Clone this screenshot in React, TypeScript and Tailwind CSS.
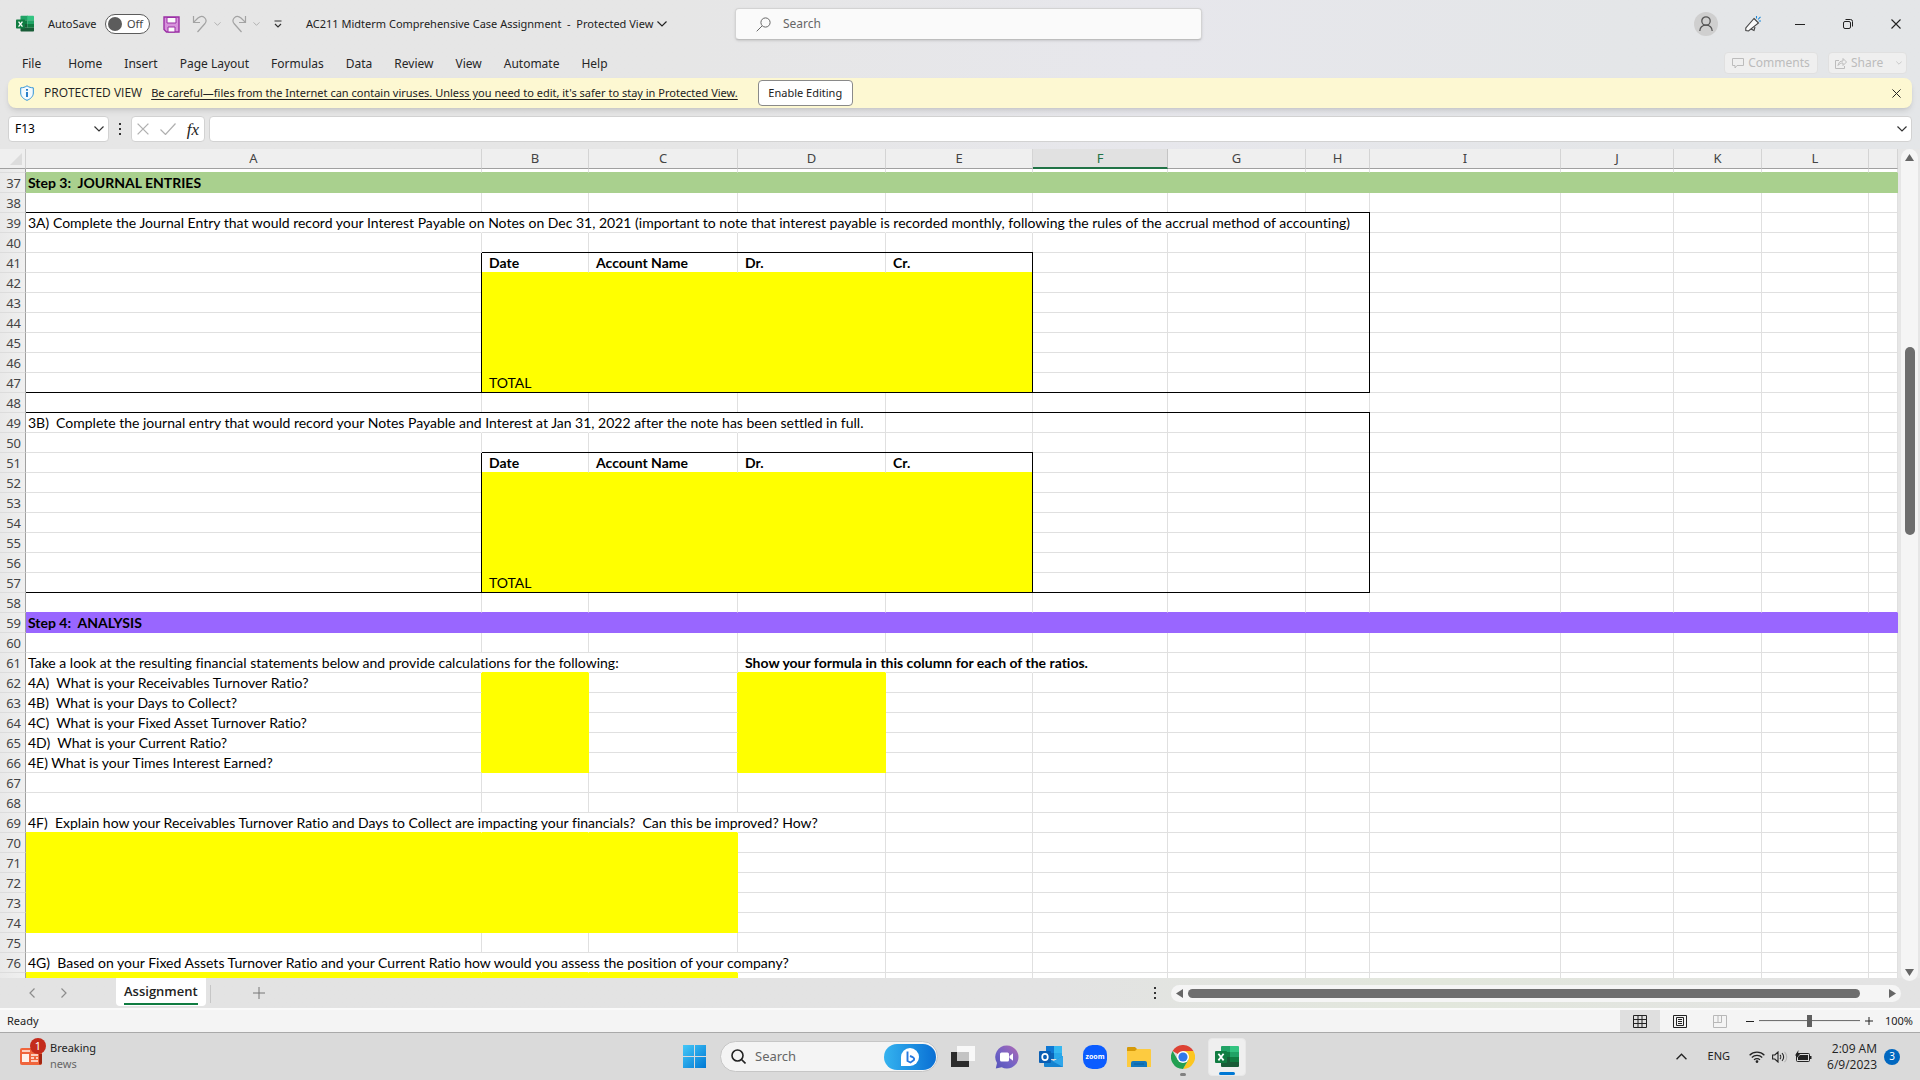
import React from 'react';
import clsx from 'clsx';

type Fill = 'green' | 'purple' | 'yellow';
type Tone = Fill | 'grid' | 'black' | 'none';

interface Range {
  c1: number;
  r1: number;
  c2: number;
  r2: number;
}

interface CellText {
  text: string;
  bold?: boolean;
  // last column index the text runs into
  spill?: number;
}

const columns = ['A', 'B', 'C', 'D', 'E', 'F', 'G', 'H', 'I', 'J', 'K', 'L', ''];
const columnWidths = [
  'w-[456px]', 'w-[107px]', 'w-[149px]', 'w-[148px]', 'w-[147px]', 'w-[135px]', 'w-[138px]',
  'w-[64px]', 'w-[191px]', 'w-[113px]', 'w-[88px]', 'w-[107px]', '',
];
const LAST = columns.length - 1;
const ACTIVE_COLUMN = 5;

const rows = Array.from({ length: 42 }, (_, i) => 36 + i);

const fills: (Range & { color: Fill })[] = [
  { c1: 0, r1: 37, c2: LAST, r2: 37, color: 'green' },
  { c1: 0, r1: 59, c2: LAST, r2: 59, color: 'purple' },
  { c1: 1, r1: 42, c2: 4, r2: 47, color: 'yellow' },
  { c1: 1, r1: 52, c2: 4, r2: 57, color: 'yellow' },
  { c1: 1, r1: 62, c2: 1, r2: 66, color: 'yellow' },
  { c1: 3, r1: 62, c2: 3, r2: 66, color: 'yellow' },
  { c1: 0, r1: 70, c2: 2, r2: 74, color: 'yellow' },
  { c1: 0, r1: 77, c2: 2, r2: 77, color: 'yellow' },
];

const boxes: Range[] = [
  { c1: 0, r1: 39, c2: 7, r2: 47 },
  { c1: 1, r1: 41, c2: 4, r2: 47 },
  { c1: 0, r1: 49, c2: 7, r2: 57 },
  { c1: 1, r1: 51, c2: 4, r2: 57 },
];

const entryHeader = (row: number): Record<string, CellText> => ({
  [`1:${row}`]: { text: 'Date', bold: true },
  [`2:${row}`]: { text: 'Account Name', bold: true },
  [`3:${row}`]: { text: 'Dr.', bold: true },
  [`4:${row}`]: { text: 'Cr.', bold: true },
});

const cells: Record<string, CellText> = {
  '0:37': { text: 'Step 3:  JOURNAL ENTRIES', bold: true },
  '0:39': {
    text: '3A) Complete the Journal Entry that would record your Interest Payable on Notes on Dec 31, 2021 (important to note that interest payable is recorded monthly, following the rules of the accrual method of accounting)',
    spill: 7,
  },
  ...entryHeader(41),
  '1:47': { text: 'TOTAL' },
  '0:49': {
    text: '3B)  Complete the journal entry that would record your Notes Payable and Interest at Jan 31, 2022 after the note has been settled in full.',
    spill: 3,
  },
  ...entryHeader(51),
  '1:57': { text: 'TOTAL' },
  '0:59': { text: 'Step 4:  ANALYSIS', bold: true },
  '0:61': { text: 'Take a look at the resulting financial statements below and provide calculations for the following:', spill: 2 },
  '3:61': { text: 'Show your formula in this column for each of the ratios.', bold: true, spill: 5 },
  '0:62': { text: '4A)  What is your Receivables Turnover Ratio?' },
  '0:63': { text: '4B)  What is your Days to Collect?' },
  '0:64': { text: '4C)  What is your Fixed Asset Turnover Ratio?' },
  '0:65': { text: '4D)  What is your Current Ratio?' },
  '0:66': { text: '4E) What is your Times Interest Earned?' },
  '0:69': {
    text: '4F)  Explain how your Receivables Turnover Ratio and Days to Collect are impacting your financials?  Can this be improved? How?',
    spill: 3,
  },
  '0:76': {
    text: '4G)  Based on your Fixed Assets Turnover Ratio and your Current Ratio how would you assess the position of your company?',
    spill: 3,
  },
};

const fillClass: Record<Fill, string> = {
  green: 'bg-[#a9d08e]',
  purple: 'bg-[#9966ff]',
  yellow: 'bg-[#ffff00]',
};

// black lines also cover the corner pixel, so they stay unbroken from cell to cell
const rightClass: Record<Tone, string> = {
  grid: 'border-r-[#e0e0e0]',
  none: 'border-r-white',
  black: 'relative border-r-black after:absolute after:top-0 after:-right-px after:-bottom-px after:w-px after:bg-black',
  green: 'border-r-[#a9d08e]',
  purple: 'border-r-[#9966ff]',
  yellow: 'border-r-[#ffff00]',
};

const bottomClass: Record<Tone, string> = {
  grid: 'border-b-[#e0e0e0]',
  none: 'border-b-white',
  black: 'relative border-b-black before:absolute before:-right-px before:-bottom-px before:left-0 before:h-px before:bg-black',
  green: 'border-b-[#a9d08e]',
  purple: 'border-b-[#9966ff]',
  yellow: 'border-b-[#ffff00]',
};

const inside = (b: Range, c: number, r: number) => c >= b.c1 && c <= b.c2 && r >= b.r1 && r <= b.r2;
const fillAt = (c: number, r: number) => fills.find((f) => inside(f, c, r))?.color;

const rightTone = (c: number, r: number): Tone => {
  if (boxes.some((b) => r >= b.r1 && r <= b.r2 && (b.c2 === c || b.c1 - 1 === c))) return 'black';
  const fill = fillAt(c + 1, r) ?? fillAt(c, r);
  if (fill) return fill;
  const spilled = Object.entries(cells).some(([key, cell]) => {
    const [col, row] = key.split(':').map(Number);
    return row === r && cell.spill !== undefined && c >= col && c < cell.spill;
  });
  return spilled ? 'none' : 'grid';
};

const bottomTone = (c: number, r: number): Tone => {
  if (boxes.some((b) => c >= b.c1 && c <= b.c2 && (b.r2 === r || b.r1 - 1 === r))) return 'black';
  return fillAt(c, r + 1) ?? fillAt(c, r) ?? 'grid';
};

const Chevron = ({ className }: { className?: string }) => (
  <svg viewBox="0 0 10 6" className={clsx('fill-none stroke-current', className)} aria-hidden="true">
    <path d="M.5.5 5 5 9.5.5" strokeWidth="1.2" />
  </svg>
);

const CloseIcon = ({ className }: { className?: string }) => (
  <svg viewBox="0 0 10 10" className={clsx('fill-none stroke-current', className)} aria-hidden="true">
    <path d="M.5.5l9 9M9.5.5l-9 9" strokeWidth="1.1" />
  </svg>
);

const Dots = () => (
  <span className="flex flex-col gap-[3px]" aria-hidden="true">
    <i className="size-[2px] bg-[#333]" />
    <i className="size-[2px] bg-[#333]" />
    <i className="size-[2px] bg-[#333]" />
  </span>
);

const ExcelLogo = ({ className }: { className?: string }) => (
  <svg viewBox="0 0 24 24" className={className} aria-hidden="true">
    <path d="M7 1h9v6H6V2a1 1 0 011-1z" fill="#21a366" />
    <path d="M15 1h8a1 1 0 011 1v5h-9z" fill="#33c481" />
    <path d="M6 7h9v5H6z" fill="#107c41" />
    <path d="M15 7h9v5h-9z" fill="#21a366" />
    <path d="M6 12h9v5H6z" fill="#185c37" />
    <path d="M15 12h9v5h-9z" fill="#107c41" />
    <path d="M6 17h18v4a1 1 0 01-1 1H7a1 1 0 01-1-1z" fill="#185c37" />
    <rect y="6" width="12" height="12" rx="1" fill="#107c41" />
    <path d="M3.4 8.8l5.2 6.6M8.600 8.800l-5.200 6.600" stroke="#fff" strokeWidth="1.8" fill="none" />
  </svg>
);

const TitleBar = () => (
  <header className="flex h-10 items-center text-xs text-[#222]">
    <div className="flex flex-1 items-center pt-2 pl-4 text-[11px]">
      <ExcelLogo className="size-[18px]" />
      <label htmlFor="autosave" className="ml-3.5 w-[57px]">AutoSave</label>
      <span className="relative flex">
        <input
          id="autosave"
          type="checkbox"
          role="switch"
          className="h-5 w-[45px] appearance-none rounded-full border-[1.5px] border-[#5c5c5c] bg-white"
        />
        <i className="pointer-events-none absolute top-[3px] left-[3px] size-3.5 rounded-full bg-[#5c5c5c]" />
        <span className="pointer-events-none absolute top-px left-[22px] leading-[18px] text-[#444]">Off</span>
      </span>
      <button aria-label="Save" className="ml-[13px]">
        <svg viewBox="0 0 17 17" className="size-[17px]" fill="none">
          <path d="M1 1h15v15H3.500L1 13.500z" fill="#d792dc" stroke="#9b2fa5" strokeWidth="1.4" />
          <path d="M4 1.500h9v5.500H4zM5 11h7v5H5z" fill="#fafafa" stroke="#9b2fa5" />
        </svg>
      </button>
      <button aria-label="Undo" className="ml-3 flex items-center gap-1.5 text-[#a3a3a3]">
        <svg viewBox="0 0 16 18" className="h-[18px] w-4 fill-none stroke-current">
          <path d="M1.500 1v6.500H8M1.800 7.200L6 3c5-4.500 10 1.500 7 5.500L5.500 17" strokeWidth="1.2" />
        </svg>
        <Chevron className="h-1 w-[7px]" />
      </button>
      <button aria-label="Redo" className="ml-2.5 flex items-center gap-1.5 text-[#a3a3a3]">
        <svg viewBox="0 0 16 18" className="h-[18px] w-4 fill-none stroke-current">
          <path d="M14.500 1v6.500H8M14.200 7.200L10 3C5-1.500 0 4.500 3 8.500L10.500 17" strokeWidth="1.2" />
        </svg>
        <Chevron className="h-1 w-[7px]" />
      </button>
      <button aria-label="Customize Quick Access Toolbar" className="ml-3.5">
        <svg viewBox="0 0 8 8" className="size-2 fill-none stroke-[#333]">
          <path d="M.5 1h7M1 4l3 3 3-3" strokeWidth="1.2" />
        </svg>
      </button>
      <button className="ml-6 flex items-center gap-1 whitespace-pre">
        AC211 Midterm Comprehensive Case Assignment  -  Protected View
        <Chevron className="h-1.5 w-2.5" />
      </button>
    </div>
    <div className="mt-2 ml-5 flex h-8 w-[467px] items-center rounded border border-[#d3d3d3] border-b-[#bdbdbd] bg-[#fafafa] pl-5 shadow-sm">
      <svg viewBox="0 0 15 15" className="size-[15px] fill-none stroke-[#666]">
        <circle cx="9.500" cy="5.500" r="4.600" />
        <path d="M6 9L.7 14.300" />
      </svg>
      <input aria-label="Search" placeholder="Search" className="ml-3 flex-1 bg-transparent text-xs outline-none placeholder:text-[#666]" />
    </div>
    <div className="flex flex-1 items-center justify-end pt-2 pr-[19px] text-[#222]">
      <button aria-label="Account" className="mr-[27px] flex size-6 justify-center rounded-full bg-[#cfcfcf] pt-1">
        <svg viewBox="0 0 14 16" className="h-4 w-3.5 fill-none stroke-[#555]" strokeWidth="1.3">
          <circle cx="7" cy="5" r="4.200" />
          <path d="M.8 15c0-3.500 2.500-5.800 6.200-5.800s6.200 2.300 6.200 5.800" />
        </svg>
      </button>
      <button aria-label="Coming soon" className="mr-[34px]">
        <svg viewBox="0 0 16 16" className="size-4 fill-none stroke-[#444]" strokeWidth="1.1">
          <path d="M9 2.500l4.500 4.500L3.500 15 .8 14.500.8 12z" fill="#fafafa" />
          <path d="M6 13l3 1.500 1-3.500" />
          <path d="M11.500 2.500V0M13 3.500L15.500.8M13.700 5H16" stroke="#1a87d7" />
        </svg>
      </button>
      <button aria-label="Minimize" className="mr-[38px] h-px w-2.5 bg-[#222]" />
      <button aria-label="Restore" className="mr-[38px]">
        <svg viewBox="0 0 10 10" className="size-2.5 fill-none stroke-[#222]">
          <rect x=".5" y="2.500" width="7" height="7" rx="1.500" />
          <path d="M2.500.5h5a2 2 0 012 2v5" />
        </svg>
      </button>
      <button aria-label="Close">
        <CloseIcon className="size-2.5" />
      </button>
    </div>
  </header>
);

const tabs = ['Home', 'Insert', 'Page Layout', 'Formulas', 'Data', 'Review', 'View', 'Automate', 'Help'];

const RibbonTabs = () => (
  <div className="flex h-[38px] items-end justify-between pr-[13px] pl-[22px] text-xs text-[#262626]">
    <nav className="flex h-7 gap-[22px]">
      <button className="mr-[5px]">File</button>
      {tabs.map((tab) => (
        <button key={tab}>{tab}</button>
      ))}
    </nav>
    <div className="mb-1 flex gap-2.5 text-[#bcbcbc]">
      <button disabled className="flex h-[22px] w-[94px] items-center justify-center gap-1 rounded border border-[#e0e0e0] bg-[#efefef]">
        <svg viewBox="0 0 12 11" className="h-[11px] w-3 fill-none stroke-current">
          <path d="M.5.5h11v7H5l-2 2.500V7.500H.5z" />
        </svg>
        Comments
      </button>
      <button disabled className="flex h-[22px] w-[79px] items-center gap-1 rounded border border-[#e0e0e0] bg-[#efefef] pl-1.5">
        <svg viewBox="0 0 12 12" className="size-3 fill-none stroke-current">
          <path d="M4 3.500H.5v8h9V9M3 8.500c.5-3 2-4.500 5-4.500V1.500L11.500 5 8 8.500V6C6 6 4.500 6.500 3 8.500z" />
        </svg>
        Share
        <Chevron className="ml-auto mr-1 h-1 w-1.5" />
      </button>
    </div>
  </div>
);

const ProtectedBanner = () => (
  <section className="mx-2 flex h-[30px] items-center rounded-lg bg-[#fdf8d2] pr-[11px] pl-3 text-[11px] text-[#222] shadow-md">
    <svg viewBox="0 0 14 16" className="h-4 w-3.5 shrink-0 fill-none">
      <path d="M7 .8c2 1.400 4 2 6.300 2V8c0 3.500-2.800 6-6.300 7.300C3.500 14 .7 11.500.7 8V2.800c2.300 0 4.300-.6 6.300-2z" fill="#f4fafe" stroke="#2f93d8" />
      <path d="M7 7v5M7 4v1.800" stroke="#1472c4" strokeWidth="1.800" />
    </svg>
    <strong className="ml-2.5 font-['Open_Sans',sans-serif] text-xs font-medium">PROTECTED VIEW</strong>
    <a href="#protected-view" className="ml-[9px] underline underline-offset-2">
      Be careful—files from the Internet can contain viruses. Unless you need to edit, it's safer to stay in Protected View.
    </a>
    <button className="ml-5 h-[26px] w-[95px] rounded border border-[#8a8a8a] bg-white">Enable Editing</button>
    <button aria-label="Close message" className="ml-auto">
      <CloseIcon className="size-[9px]" />
    </button>
  </section>
);

const FormulaBar = () => (
  <div className="flex h-[41px] items-center px-2 pt-px text-xs">
    <div className="flex h-[26px] w-[101px] items-center rounded border border-[#d2d2d2] bg-white pr-1 pl-1.5">
      <input aria-label="Name box" defaultValue="F13" className="w-0 flex-1 outline-none" />
      <button aria-label="Name list">
        <Chevron className="h-1.5 w-2.5 text-[#333]" />
      </button>
    </div>
    <span className="mx-2.5"><Dots /></span>
    <div className="flex h-[26px] w-[74px] items-center justify-between rounded border border-[#d2d2d2] bg-white px-[5px]">
      <button aria-label="Cancel" disabled className="text-[#b0b0b0]">
        <CloseIcon className="size-3" />
      </button>
      <button aria-label="Enter" disabled className="text-[#b0b0b0]">
        <svg viewBox="0 0 16 12" className="h-3 w-4 fill-none stroke-current">
          <path d="M.5 6.500L5.500 11.500 15.500.5" strokeWidth="1.200" />
        </svg>
      </button>
      <button aria-label="Insert function" className="font-['Liberation_Serif',serif] text-[17px] leading-none italic text-[#222]">fx</button>
    </div>
    <div className="ml-1 flex h-[26px] flex-1 items-center rounded border border-[#d2d2d2] bg-white pr-1">
      <input aria-label="Formula" className="flex-1 px-2 outline-none" />
      <button aria-label="Expand formula bar">
        <Chevron className="h-1.5 w-2.5 text-[#333]" />
      </button>
    </div>
  </div>
);

const Sheet = () => (
  <div className="min-w-0 flex-1 overflow-hidden bg-white">
    <table className="w-full table-fixed border-separate border-spacing-0">
      <colgroup>
        <col className="w-[26px]" />
        {columnWidths.map((width, i) => (
          <col key={i} className={width} />
        ))}
      </colgroup>
      <thead>
        <tr>
          <th aria-label="Select all" className="h-5 border-r border-b border-r-[#d0d0d0] border-b-[#a0a0a0] bg-[#efefef] p-0">
            <svg viewBox="0 0 12 12" className="ml-2.5 size-3 fill-[#dcdcdc]">
              <path d="M12 0v12H0z" />
            </svg>
          </th>
          {columns.map((name, c) => (
            <th
              key={c}
              scope="col"
              className={clsx(
                'h-5 border-r p-0 text-[13px] leading-4 font-normal',
                c === ACTIVE_COLUMN
                  ? 'border-b-2 border-r-[#c4c4c4] border-b-[#217346] bg-[#e1e1e1] text-[#217346]'
                  : 'border-b border-r-[#d4d4d4] border-b-[#a0a0a0] bg-[#efefef] pb-px text-[#444]'
              )}
            >
              {name}
            </th>
          ))}
        </tr>
      </thead>
      <tbody>
        {rows.map((row) => {
          // the first row is scrolled almost out of view
          const clipped = row === 36;
          return (
            <tr key={row}>
              <th
                scope="row"
                className={clsx(
                  'border-r border-b border-r-[#a0a0a0] border-b-[#dcdcdc] bg-linear-to-r from-[#e9e9e9] to-[#f0f0f0] p-0 pr-1 text-right text-[13px] leading-[17px] font-normal text-[#444]',
                  clipped ? 'h-1' : 'h-5 pt-0.5'
                )}
              >
                {!clipped && row < 77 && row}
              </th>
              {columns.map((_, c) => {
                const cell = cells[`${c}:${row}`];
                const fill = fillAt(c, row);
                return (
                  <td
                    key={c}
                    className={clsx(
                      "border-r border-b p-0 font-['Lato',sans-serif] text-sm leading-[17px] whitespace-pre text-black [font-variant-ligatures:none]",
                      clipped ? 'h-1' : 'h-5 py-px',
                      c === 0 ? 'pl-[2px]' : 'pl-[7px]',
                      cell?.bold && 'font-bold',
                      fill && fillClass[fill],
                      rightClass[rightTone(c, row)],
                      bottomClass[bottomTone(c, row)]
                    )}
                  >
                    {cell?.text}
                  </td>
                );
              })}
            </tr>
          );
        })}
      </tbody>
    </table>
  </div>
);

const VerticalScrollbar = () => (
  <div className="z-10 mr-0.5 -mb-[3px] ml-[3px] flex w-[17px] flex-col items-center rounded-full bg-[#f5f5f5] py-[5px]">
    <svg viewBox="0 0 9 7" className="h-[7px] w-[9px] shrink-0 fill-[#666]"><path d="M4.500 0L9 7H0z" /></svg>
    <div className="grow-[186]" />
    <div className="w-2.5 grow-[188] rounded-full bg-[#6e6e6e]" />
    <div className="grow-[433]" />
    <svg viewBox="0 0 9 7" className="h-[7px] w-[9px] shrink-0 fill-[#666]"><path d="M4.500 7L9 0H0z" /></svg>
  </div>
);

const SheetTabs = () => (
  <div className="flex h-8 shrink-0 border-b-2 border-[#fafafa] bg-linear-to-r from-[#e3e3e3] from-55% via-[#e2e7dc] via-75% to-[#e3e3e3] to-95%">
    <div className="flex items-center gap-[22px] pl-[27px] text-[#8c8c8c]">
      <button aria-label="Previous sheet"><Chevron className="h-1.5 w-2.5 rotate-90" /></button>
      <button aria-label="Next sheet"><Chevron className="h-1.5 w-2.5 -rotate-90" /></button>
    </div>
    <div className="ml-[47px] h-7 rounded-b bg-white px-2">
      <button className="h-[25px] border-b-2 border-[#107c41] font-['Open_Sans',sans-serif] text-[13px] font-semibold text-[#222]">Assignment</button>
    </div>
    <div className="mt-[7px] ml-1 h-[18px] w-px bg-[#c6c6c6]" />
    <button aria-label="New sheet" className="ml-[42px] text-[#777]">
      <svg viewBox="0 0 12 12" className="size-3 fill-none stroke-current"><path d="M6 0v12M0 6h12" /></svg>
    </button>
    <div className="ml-auto flex items-center pr-[19px]">
      <Dots />
      <div className="ml-[15px] flex h-[17px] w-[730px] items-center rounded-full bg-[#f5f5f5] px-[5px]">
        <svg viewBox="0 0 7 9" className="h-[9px] w-[7px] fill-[#666]"><path d="M0 4.500L7 0v9z" /></svg>
        <div className="ml-[5px] h-[9px] w-[672px] rounded-full bg-[#6e6e6e]" />
        <svg viewBox="0 0 7 9" className="ml-auto h-[9px] w-[7px] fill-[#666]"><path d="M7 4.500L0 0v9z" /></svg>
      </div>
    </div>
  </div>
);

const StatusBar = () => (
  <footer className="flex h-[23px] shrink-0 items-center border-b border-[#a9a9a9] bg-[#f4f4f4] pr-[7px] pl-[7px] text-[11px] text-[#222]">
    <span>Ready</span>
    <button aria-label="Normal" className="ml-auto flex h-[22px] w-10 items-center justify-center bg-[#dfdfdf]">
      <svg viewBox="0 0 14 13" className="h-[13px] w-3.5 fill-none stroke-[#222]"><path d="M.5.5h13v12H.5zM5 .5v12M9 .5v12M.5 4.500h13M.5 8.500h13" /></svg>
    </button>
    <button aria-label="Page Layout" className="flex w-10 justify-center">
      <svg viewBox="0 0 14 13" className="h-[13px] w-3.5 fill-none stroke-[#222]"><path d="M.5.5h13v12H.5zM3.500 2.500h7v8h-7zM5 4.500h4M5 6.500h4M5 8.500h4" /></svg>
    </button>
    <button aria-label="Page Break Preview" disabled className="flex w-10 justify-center">
      <svg viewBox="0 0 14 13" className="h-[13px] w-3.5 fill-none stroke-[#b8b8b8]"><path d="M.5.5h13v12H.5zM.5 7.500h8v-7M5 .5v7" /></svg>
    </button>
    <button aria-label="Zoom out" className="ml-1.5 h-px w-2 bg-[#222]" />
    <input
      type="range"
      aria-label="Zoom"
      defaultValue={50}
      className="mx-[5px] h-3 w-[101px] appearance-none bg-linear-to-b from-transparent from-45% via-[#666] via-45% to-transparent to-55% [&::-webkit-slider-thumb]:h-3 [&::-webkit-slider-thumb]:w-[5px] [&::-webkit-slider-thumb]:appearance-none [&::-webkit-slider-thumb]:bg-[#5f5f5f]"
    />
    <button aria-label="Zoom in">
      <svg viewBox="0 0 8 8" className="size-2 fill-none stroke-[#222]"><path d="M4 0v8M0 4h8" /></svg>
    </button>
    <span className="w-10 text-right">100%</span>
  </footer>
);

const apps = [
  {
    name: 'Task View',
    icon: (
      <>
        <rect y="7" width="18" height="15" fill="#2b2b2b" />
        <path d="M6 1h18v15H6z" fill="#f8f8f8" />
        <path d="M6 7h12v9H6z" fill="#c4c4c4" />
      </>
    ),
  },
  {
    name: 'Chat',
    icon: (
      <>
        <defs>
          <linearGradient id="chat" x1="1" y1="0" x2="0" y2="1"><stop stopColor="#b06ab5" /><stop offset=".6" stopColor="#6f62c6" /><stop offset="1" stopColor="#5552b8" /></linearGradient>
        </defs>
        <path d="M12 .5a11.500 11.500 0 11-5.300 21.700L.8 23.500 2 18A11.500 11.500 0 0112 .5z" fill="url(#chat)" />
        <rect x="5" y="7.500" width="9" height="9" rx="1.500" fill="#fff" />
        <path d="M14.500 11l3.500-2.700v7.400l-3.500-2.700z" fill="#fff" />
      </>
    ),
  },
  {
    name: 'Outlook',
    icon: (
      <>
        <path d="M7 1h16v13H7z" fill="#0a64b8" />
        <path d="M7 1h8v7H7z" fill="#0f78d4" />
        <path d="M15 1h8v7h-8z" fill="#35b8f1" />
        <path d="M15 8h8v6h-8z" fill="#28a8ea" />
        <path d="M5 12l10 4 9-5v11H6a1 1 0 01-1-1z" fill="#1683d0" />
        <path d="M24 11v11L14 16.500z" fill="#2fa6ea" />
        <rect y="6" width="12" height="12" rx="1" fill="#0a5fb4" />
        <ellipse cx="6" cy="12" rx="2.800" ry="3.100" fill="none" stroke="#fff" strokeWidth="1.700" />
      </>
    ),
  },
  {
    name: 'Zoom',
    icon: (
      <>
        <rect width="24" height="24" rx="9.500" fill="#0b5cff" />
        <text x="12" y="14" textAnchor="middle" fontSize="7" fontWeight="700" fill="#fff">zoom</text>
      </>
    ),
  },
  {
    name: 'File Explorer',
    icon: (
      <>
        <path d="M0 3a1 1 0 011-1h7l2 2v3H0z" fill="#d69a09" />
        <path d="M0 6h8l2-2h13a1 1 0 011 1v17H0z" fill="#fdcb40" />
        <path d="M4 22v-4a2 2 0 012-2h12a2 2 0 012 2v4z" fill="#1377bd" />
        <path d="M7 19h10" stroke="#0d5f9c" />
      </>
    ),
  },
  {
    name: 'Chrome',
    icon: (
      <>
        <path d="M12 12L1.600 6A12 12 0 0122.400 6z" fill="#dd4234" />
        <path d="M12 12V6h10.400A12 12 0 0112 24l5.200-9z" fill="#fcc620" />
        <path d="M12 12l5.200 3L12 24A12 12 0 011.600 6l5.200 9z" fill="#22a052" />
        <circle cx="12" cy="12" r="6" fill="#fff" />
        <circle cx="12" cy="12" r="4.600" fill="#3279ea" />
      </>
    ),
  },
];

const Taskbar = () => (
  <div className="grid h-[47px] shrink-0 grid-cols-[1fr_auto_1fr] items-center bg-[#dadada] text-xs text-[#222]">
    <button className="ml-5 flex items-center justify-self-start pb-0.5 text-left text-[11px]">
      <svg viewBox="0 0 27 27" className="-mt-2 size-[27px]" aria-hidden="true">
        <rect y="10" width="22" height="17" rx="2" fill="#f0653c" />
        <path d="M19 16h3v9a2 2 0 01-3 1z" fill="#a32612" />
        <rect x="2" y="16" width="7" height="8" fill="#fff1ea" />
        <path d="M11 17h7M11 20h3M16 20h2M11 23h7M2 13h8" stroke="#fff1ea" strokeWidth="1.500" />
        <circle cx="18" cy="8" r="8" fill="#c42b1c" />
        <text x="18" y="12" textAnchor="middle" fontSize="11" fill="#fff">1</text>
      </svg>
      <span className="ml-[3px] leading-4">
        Breaking
        <span className="block text-[#666]">news</span>
      </span>
    </button>

    <div className="flex items-center pl-0.5">
      <button aria-label="Start">
        <svg viewBox="0 0 23 23" className="size-[23px]">
          <defs>
            <linearGradient id="start" x1="0" y1="0" x2="1" y2="1"><stop stopColor="#45c8f8" /><stop offset="1" stopColor="#0078d4" /></linearGradient>
          </defs>
          <path d="M0 0h11v11H0zM12 0h11v11H12zM0 12h11v11H0zM12 12h11v11H12z" fill="url(#start)" />
        </svg>
      </button>
      <div className="ml-3.5 flex h-[31px] w-[218px] items-center rounded-full border border-[#c6c6c6] bg-[#f4f4f4] pr-px pl-2.5">
        <svg viewBox="0 0 15 15" className="size-[15px] fill-none stroke-[#222]" strokeWidth="1.600">
          <circle cx="6.500" cy="6.500" r="5.500" />
          <path d="M10.500 10.500l4 4" />
        </svg>
        <input aria-label="Search Windows" placeholder="Search" className="ml-[9px] w-0 flex-1 bg-transparent text-[13px] outline-none placeholder:text-[#666]" />
        <button aria-label="Bing" className="flex h-[26px] w-[52px] items-center justify-center rounded-full bg-linear-to-r from-[#35b3ef] to-[#0a6fd4]">
          <svg viewBox="0 0 18 18" className="size-[18px]">
            <path d="M9 0a9 9 0 110 18H0V9a9 9 0 019-9z" fill="#fff" />
            <path d="M6.500 3.500v9.500l3 1.500 3.500-2.500c.8-2-1-3-4-4" fill="none" stroke="#2879e0" strokeWidth="1.900" />
          </svg>
        </button>
      </div>
      <div className="ml-[13px] flex items-center gap-5">
        {apps.map(({ name, icon }) => (
          <button key={name} aria-label={name} className="relative">
            <svg viewBox="0 0 24 24" className="size-6">{icon}</svg>
            {name === 'Chrome' && <i className="absolute -bottom-[7px] left-[9px] h-[3px] w-1.5 rounded-full bg-[#808080]" />}
          </button>
        ))}
        <button aria-label="Excel" className="relative -mx-[7px] flex size-[38px] items-center justify-center rounded border border-[#e8e8e8] bg-[#efefef]">
          <ExcelLogo className="size-6" />
          <i className="absolute bottom-0 h-[3px] w-4 rounded-full bg-[#0078d4]" />
        </button>
      </div>
    </div>

    <div className="flex items-center justify-self-end pr-5">
      <button aria-label="Show hidden icons" className="mr-[21px]"><Chevron className="h-[7px] w-[11px] rotate-180" /></button>
      <span className="mr-[19px] text-[11px]">ENG</span>
      <button aria-label="Network, sound and battery" className="mr-3 flex items-center gap-[7px]">
        <svg viewBox="0 0 16 12" className="h-3 w-4 fill-none stroke-[#222]" strokeWidth="1.200">
          <path d="M.6 4.200a10.500 10.500 0 0114.800 0M2.800 6.500a7.400 7.400 0 0110.400 0M5 8.800a4.200 4.200 0 016 0" />
          <circle cx="8" cy="10.600" r=".8" fill="#222" />
        </svg>
        <svg viewBox="0 0 16 12" className="h-3 w-4 fill-none stroke-[#222]" strokeWidth="1.100">
          <path d="M.6 4v4h2.200L6 11V1L2.800 4zM8 4c1 1 1 3 0 4M10 2.200c2.200 2 2.200 5.600 0 7.600" />
          <path d="M12.500.8c3 3 3 7.400 0 10.400" stroke="#b5b5b5" />
        </svg>
        <svg viewBox="0 0 17 13" className="h-[13px] w-[17px]">
          <path d="M2.500 3.500h11a1 1 0 011 1v6a1 1 0 01-1 1h-11a1 1 0 01-1-1v-6a1 1 0 011-1z" fill="none" stroke="#222" />
          <path d="M5 5h8v5H3V7zM15 6h1.500v3H15z" fill="#222" />
          <path d="M3.500 0L0 5.500h2L1 9l4-5H3z" fill="#222" />
        </svg>
      </button>
      <div className="w-[53px] text-right font-['Open_Sans',sans-serif] leading-4">
        2:09 AM<br />6/9/2023
      </div>
      <span className="ml-[7px] flex size-4 items-center justify-center rounded-full bg-[#0067c0] text-[10px] text-white">3</span>
    </div>
  </div>
);

const App: React.FC = () => {
  return (
    <div className="flex h-screen flex-col overflow-hidden bg-[#e6e6e6] font-['Noto_Sans','Open_Sans',sans-serif]">
      <div className="shrink-0 bg-linear-to-r from-[#e6e6e6] from-35% via-[#e7e7ec] via-60% to-[#e4e6e8] to-85%">
        <TitleBar />
        <RibbonTabs />
        <ProtectedBanner />
        <FormulaBar />
      </div>
      <main className="flex min-h-0 flex-1">
        <Sheet />
        <VerticalScrollbar />
      </main>
      <SheetTabs />
      <StatusBar />
      <Taskbar />
    </div>
  );
};

export default App;
